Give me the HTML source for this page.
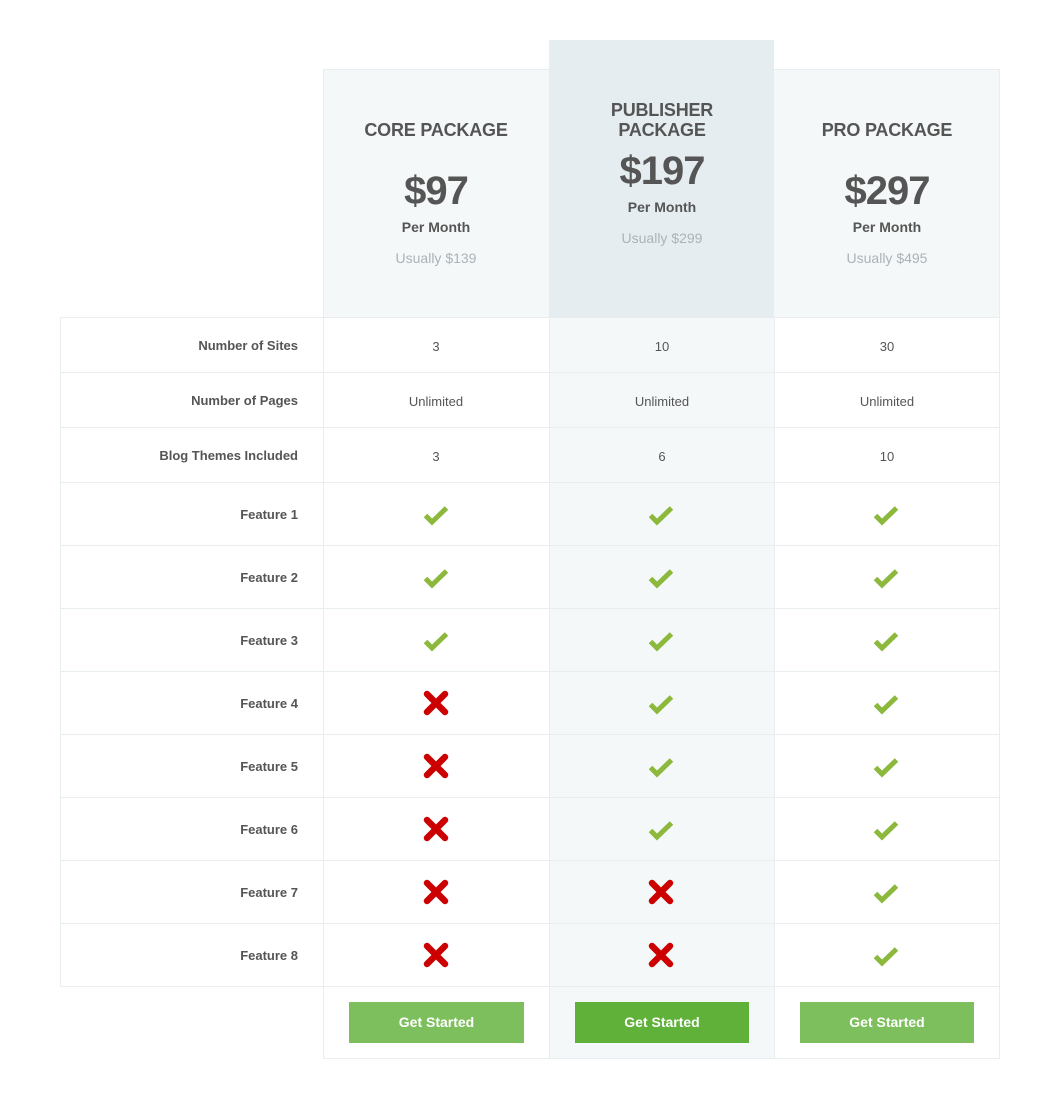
<!DOCTYPE html>
<html><head><meta charset="utf-8"><style>
*{margin:0;padding:0;box-sizing:border-box}
body{width:1060px;height:1098px;background:#fff;position:relative;font-family:"Liberation Sans",Arial,sans-serif;color:#555;overflow:hidden}
.a{position:absolute}
.bg1{background:#f4f8f9}
.bg2{background:#e5edf0}
.v{position:absolute;width:1px;background:#e8eef0}
.h{position:absolute;height:1px;background:#e8eef0}
.t{position:absolute;text-align:center;width:226px}
.title{font-size:18px;font-weight:bold;line-height:20px;letter-spacing:-0.2px}
.price{font-size:40px;font-weight:bold;line-height:40px;letter-spacing:-1px}
.pm{font-size:14px;font-weight:bold;line-height:16px}
.us{font-size:14px;color:#aab3b8;line-height:16px}
.lbl{position:absolute;right:762px;font-size:13px;font-weight:bold;line-height:16px;text-align:right;white-space:nowrap}
.val{position:absolute;width:226px;text-align:center;font-size:13px;line-height:16px}
.btn{position:absolute;top:1002px;height:41px;width:175px;color:#fff;font-weight:bold;font-size:14px;line-height:41px;text-align:center}
</style></head><body>
<div class="a bg1" style="left:323px;top:69px;width:226px;height:248px"></div>
<div class="a bg2" style="left:549px;top:40px;width:225px;height:277px"></div>
<div class="a bg1" style="left:774px;top:69px;width:225px;height:248px"></div>
<div class="a bg1" style="left:549px;top:317px;width:225px;height:741px"></div>
<div class="v" style="left:60px;top:317px;height:670px"></div>
<div class="v" style="left:323px;top:69px;height:990px"></div>
<div class="v" style="left:549px;top:317px;height:741px"></div>
<div class="v" style="left:774px;top:317px;height:741px"></div>
<div class="v" style="left:999px;top:69px;height:990px"></div>
<div class="h" style="left:323px;top:69px;width:226px"></div>
<div class="h" style="left:774px;top:69px;width:226px"></div>
<div class="h" style="left:60px;top:317px;width:940px"></div>
<div class="h" style="left:60px;top:372px;width:940px"></div>
<div class="h" style="left:60px;top:427px;width:940px"></div>
<div class="h" style="left:60px;top:482px;width:940px"></div>
<div class="h" style="left:60px;top:545px;width:940px"></div>
<div class="h" style="left:60px;top:608px;width:940px"></div>
<div class="h" style="left:60px;top:671px;width:940px"></div>
<div class="h" style="left:60px;top:734px;width:940px"></div>
<div class="h" style="left:60px;top:797px;width:940px"></div>
<div class="h" style="left:60px;top:860px;width:940px"></div>
<div class="h" style="left:60px;top:923px;width:940px"></div>
<div class="h" style="left:60px;top:986px;width:940px"></div>
<div class="h" style="left:323px;top:1058px;width:677px"></div>

<div class="t title" style="left:323px;top:120px">CORE PACKAGE</div>
<div class="t price" style="left:323px;top:171px">$97</div>
<div class="t pm" style="left:323px;top:219px">Per Month</div>
<div class="t us" style="left:323px;top:250px">Usually $139</div>

<div class="t title" style="left:549px;top:100px">PUBLISHER<br>PACKAGE</div>
<div class="t price" style="left:549px;top:151px">$197</div>
<div class="t pm" style="left:549px;top:199px">Per Month</div>
<div class="t us" style="left:549px;top:230px">Usually $299</div>

<div class="t title" style="left:774px;top:120px">PRO PACKAGE</div>
<div class="t price" style="left:774px;top:171px">$297</div>
<div class="t pm" style="left:774px;top:219px">Per Month</div>
<div class="t us" style="left:774px;top:250px">Usually $495</div>

<div class="lbl" style="top:338px">Number of Sites</div>
<div class="lbl" style="top:393px">Number of Pages</div>
<div class="lbl" style="top:448px">Blog Themes Included</div>
<div class="lbl" style="top:507px">Feature 1</div>
<div class="lbl" style="top:570px">Feature 2</div>
<div class="lbl" style="top:633px">Feature 3</div>
<div class="lbl" style="top:696px">Feature 4</div>
<div class="lbl" style="top:759px">Feature 5</div>
<div class="lbl" style="top:822px">Feature 6</div>
<div class="lbl" style="top:885px">Feature 7</div>
<div class="lbl" style="top:948px">Feature 8</div>

<div class="val" style="left:323px;top:339px">3</div>
<div class="val" style="left:549px;top:339px">10</div>
<div class="val" style="left:774px;top:339px">30</div>
<div class="val" style="left:323px;top:394px">Unlimited</div>
<div class="val" style="left:549px;top:394px">Unlimited</div>
<div class="val" style="left:774px;top:394px">Unlimited</div>
<div class="val" style="left:323px;top:449px">3</div>
<div class="val" style="left:549px;top:449px">6</div>
<div class="val" style="left:774px;top:449px">10</div>

<svg class="a" style="left:0;top:0" width="1060" height="1098">
<defs>
<g id="ck"><path d="M-10.5 -2.5 L-4 4 L10.5 -10" fill="none" stroke="#8cb83c" stroke-width="5"/></g>
<g id="cx"><path d="M-9 -9 L9 9 M9 -9 L-9 9" fill="none" stroke="#cc0000" stroke-width="6.5" stroke-linecap="round"/></g>
</defs>
<use href="#ck" x="436" y="518"/><use href="#ck" x="661" y="518"/><use href="#ck" x="886" y="518"/>
<use href="#ck" x="436" y="581"/><use href="#ck" x="661" y="581"/><use href="#ck" x="886" y="581"/>
<use href="#ck" x="436" y="644"/><use href="#ck" x="661" y="644"/><use href="#ck" x="886" y="644"/>
<use href="#cx" x="436" y="703"/><use href="#ck" x="661" y="707"/><use href="#ck" x="886" y="707"/>
<use href="#cx" x="436" y="766"/><use href="#ck" x="661" y="770"/><use href="#ck" x="886" y="770"/>
<use href="#cx" x="436" y="829"/><use href="#ck" x="661" y="833"/><use href="#ck" x="886" y="833"/>
<use href="#cx" x="436" y="892"/><use href="#cx" x="661" y="892"/><use href="#ck" x="886" y="896"/>
<use href="#cx" x="436" y="955"/><use href="#cx" x="661" y="955"/><use href="#ck" x="886" y="959"/>
</svg>

<div class="btn" style="left:349px;background:#7dbf5c">Get Started</div>
<div class="btn" style="left:575px;width:174px;background:#5fb13a">Get Started</div>
<div class="btn" style="left:800px;width:174px;background:#7dbf5c">Get Started</div>
</body></html>
